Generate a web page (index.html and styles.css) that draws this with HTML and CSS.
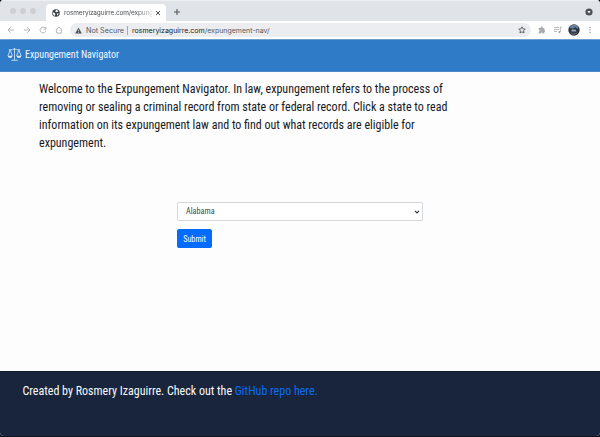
FILE: index.html
```html
<!DOCTYPE html>
<html lang="en">
<head>
<meta charset="utf-8">
<title>Expungement Navigator</title>
<link rel="stylesheet" href="styles.css">
</head>
<body>
<div class="window">
  <div class="tabstrip">
    <div class="lights"><i></i><i></i><i></i></div>
    <div class="tab">
      <svg class="globe" viewBox="0 0 8 8"><circle cx="4" cy="4" r="3.8" fill="#3c4044"/><path d="M.8 3.2 2.8 4l.5 1.2-.4 1.7C1.500 6.300.8 5 .8 3.200ZM4.200.8l2 1-.6 1.300-1.500.1-.9-.9ZM5 4.500l1.700-.2-.7 1.600-1 .7Z" fill="#fff"/></svg>
      <span class="tab-title">rosmeryizaguirre.com/expunge</span>
      <svg class="close" viewBox="0 0 6 6"><path d="M1 1l4 4M5 1 1 5" stroke="#4a4d51" stroke-width="1"/></svg>
    </div>
    <svg class="plus" viewBox="0 0 8 8"><path d="M4 1v6M1 4h6" stroke="#54575b" stroke-width="1.1"/></svg>
    <svg class="dot" viewBox="0 0 8 8"><circle cx="4" cy="4" r="3.600" fill="#4e5155"/><path d="M2.700 3h2.600v1L4 5.300 2.700 4Z" fill="#e8eaed"/></svg>
  </div>
  <div class="toolbar">
    <svg class="nav-icon" viewBox="0 0 8 8"><path d="M7.200 4H1.200M3.700 1.300 1 4l2.700 2.700" /></svg>
    <svg class="nav-icon" viewBox="0 0 8 8"><path d="M.8 4h6M4.300 1.300 7 4 4.300 6.700" /></svg>
    <svg class="nav-icon" viewBox="0 0 8 8"><path d="M6.500 2.500A2.900 2.900 0 1 0 6.900 4.500M6.900.8v2.300H4.600" /></svg>
    <svg class="nav-icon" viewBox="0 0 8 8"><path d="M.7 4 4 1l3.300 3M1.700 3.500v3.600h4.600V3.500" /></svg>
    <div class="omnibox">
      <svg class="warn" viewBox="0 0 7 7"><path d="M3.500.4 6.800 6.600H.2Z" fill="#4b4f54"/><path d="M3.500 2.700v1.800M3.500 5v.8" stroke="#ecedf0" stroke-width=".7"/></svg>
      <span class="secure">Not Secure</span>
      <span class="url"><b>rosmeryizaguirre.com</b>/expungement-nav/</span>
      <svg class="star" viewBox="0 0 8 8"><path d="m4 .8.95 2.100 2.300.25-1.700 1.550.5 2.250L4 5.800 1.950 6.950l.5-2.250L.75 3.150l2.300-.25Z" fill="none" stroke="#45484c" stroke-width=".8"/></svg>
    </div>
    <svg class="puzzle" viewBox="0 0 8 8"><path d="M.7 2h1.900a1.100 1.100 0 1 1 2.100 0h1.700v1.800a1.100 1.100 0 0 1 0 2.100v1.600H4.600a.9.900 0 0 0-1.900 0h-2V5.600a.9.900 0 0 0 0-1.800Z" fill="#a9abae"/></svg>
    <svg class="playlist" viewBox="0 0 8 8"><path d="M0 1.500h5M0 3.500h5M0 5.500h3M6.300 6V1.300H8" fill="none" stroke="#a5a7aa" stroke-width=".8"/><circle cx="5.400" cy="6.100" r="1.100" fill="#a5a7aa"/></svg>
    <svg class="avatar" viewBox="0 0 12 12"><circle cx="6" cy="6" r="5.700" fill="#30343b"/><path d="M1.500 4Q2.500.8 6 .7T10.500 4L9 4.500 7.500 3 5 4.500Z" fill="#66849f"/><path d="M3.500 5.500h4l1 2h-5Z" fill="#8ea6c0"/><path d="M2 8q4 2 8 0-1.500 3-4 3T2 8Z" fill="#555d69"/></svg>
    <svg class="more" viewBox="0 0 4 8"><g fill="#85878a"><circle cx="2" cy="1.500" r=".65"/><circle cx="2" cy="4" r=".65"/><circle cx="2" cy="6.500" r=".65"/></g></svg>
  </div>
  <header class="navbar">
    <svg class="scales" viewBox="0 0 15 15"><path d="M7.500 1v11.800M4.300 13.300h6.400M1.800 2.700h3.700q2-1.700 4 0h3.700M3.100 3 .9 8.800M3.100 3l2.300 5.800M11.900 3 9.600 8.800M11.900 3l2.200 5.800" fill="none" stroke="#dcecff" stroke-width=".8"/><path d="M.6 8.700h5Q5 10.900 3.100 10.900T.6 8.700ZM9.400 8.700h5q-.6 2.200-2.500 2.200T9.400 8.700Z" fill="#dcecff"/></svg>
    <span class="brand">Expungement Navigator</span>
  </header>
  <main>
    <p class="intro">Welcome to the Expungement Navigator. In law, expungement refers to the process of<br>removing or sealing a criminal record from state or federal record. Click a state to read<br>information on its expungement law and to find out what records are eligible for<br>expungement.</p>
    <form class="picker">
      <div class="select"><span>Alabama</span><svg viewBox="0 0 6 4"><path d="m1 .8 2 2 2-2" fill="none" stroke="#33373b" stroke-width="1.200"/></svg></div>
      <button type="button"><span>Submit</span></button>
    </form>
  </main>
  <footer><p>Created by Rosmery Izaguirre. Check out the <a>GitHub repo here.</a></p></footer>
</div>
</body>
</html>
```
FILE: styles.css
```css
* { box-sizing: border-box; }
body { margin: 0; background: #10141c; font-family: "Roboto Condensed", Roboto, sans-serif; font-stretch: 75%; }
.window { width: 600px; height: 436px; display: flex; flex-direction: column; overflow: hidden; border-radius: 4px; background: #fdfdfe; }
svg { display: block; flex: none; }
.tabstrip { height: 21px; flex: none; display: flex; align-items: flex-start; background: #e0e3e7; border-top: 1px solid #eceef0; font-family: Inter, sans-serif; font-stretch: 100%; }
.lights { display: flex; gap: 4px; padding: 7px 0 0 10px; width: 46px; }
.lights i { width: 6px; height: 6px; border-radius: 50%; background: #cdcfd2; }
.tab { width: 120px; height: 17px; margin-top: 3px; border-radius: 4px 4px 0 0; background: #fefefe; display: flex; align-items: center; padding: 0 5px 0 6px; }
.globe { width: 8px; height: 8px; }
.tab-title { margin-left: 4px; width: 88px; white-space: nowrap; font-size: 6.5px; letter-spacing: -.13px; color: #4d5054; -webkit-mask-image: linear-gradient(90deg, #000 82%, rgba(0, 0, 0, .2)); mask-image: linear-gradient(90deg, #000 82%, rgba(0, 0, 0, .2)); }
.close { width: 6px; height: 6px; margin-left: 3px; }
.plus { width: 8px; height: 8px; margin: 7px 0 0 7px; }
.dot { width: 8px; height: 8px; margin: 7px 7px 0 auto; }
.toolbar { height: 18px; flex: none; display: flex; align-items: center; padding-left: 7px; background: #fff; font-family: Inter, sans-serif; font-stretch: 100%; }
.nav-icon { width: 8px; height: 8px; margin-right: 8px; fill: none; stroke: #a3a5a8; stroke-width: .8; }
.omnibox { width: 461px; height: 14px; margin-left: -1px; border-radius: 7px; background: #ecedf0; display: flex; align-items: center; padding: 0 5px 0 5px; font-size: 7.2px; color: #55585c; white-space: nowrap; }
.warn { width: 7px; height: 7px; }
.secure { margin-left: 4px; padding-right: 3px; border-right: 1px solid #a7a9ac; }
.url { margin-left: 4px; font-size: 7px; }
.url b { font-weight: 400; color: #17191c; }
.star { width: 8px; height: 8px; margin-left: auto; }
.puzzle { width: 8px; height: 8px; margin-left: 7px; }
.playlist { width: 8px; height: 8px; margin-left: 8px; }
.avatar { width: 12px; height: 12px; margin-left: 6px; }
.more { width: 4px; height: 8px; margin-left: 8px; }
.navbar { height: 33px; flex: none; display: flex; align-items: center; padding: 0 0 3px 7px; background: #2f7bc8; border-top: 1px solid #6f9fd0; border-bottom: 1px solid #4c88c9; color: #f2f8ff; font-size: 10px; }
.scales { width: 15px; height: 15px; }
.brand { margin-left: 3px; white-space: nowrap; }
main { flex: 1; padding: 8px 39px 0; }
.intro { margin: 0; height: 72px; font-size: 12px; line-height: 18px; color: #16191c; white-space: nowrap; }
.picker { width: 246px; margin: 50px 0 0 138px; font-size: 8.2px; }
.select { height: 19px; display: flex; align-items: center; justify-content: space-between; padding: 0 2px 0 8px; border: 1px solid #d4d8dd; border-radius: 2px; color: #3f454b; background: #fff; }
.select span { padding-bottom: 1px; }
.select svg { width: 6px; height: 4px; }
button { display: block; width: 35px; height: 19px; margin-top: 8px; padding: 0; border: 0; border-radius: 2px; background: #046cfc; color: #f4f9ff; font: inherit; }
footer { height: 65px; flex: none; padding: 10px 22.5px; background: #19253d; border-top: 1px solid #10192b; color: #f8fafc; }
footer p { margin: 0; font-size: 12px; line-height: 18px; white-space: nowrap; }
footer a { color: #0a6cf0; }
```
